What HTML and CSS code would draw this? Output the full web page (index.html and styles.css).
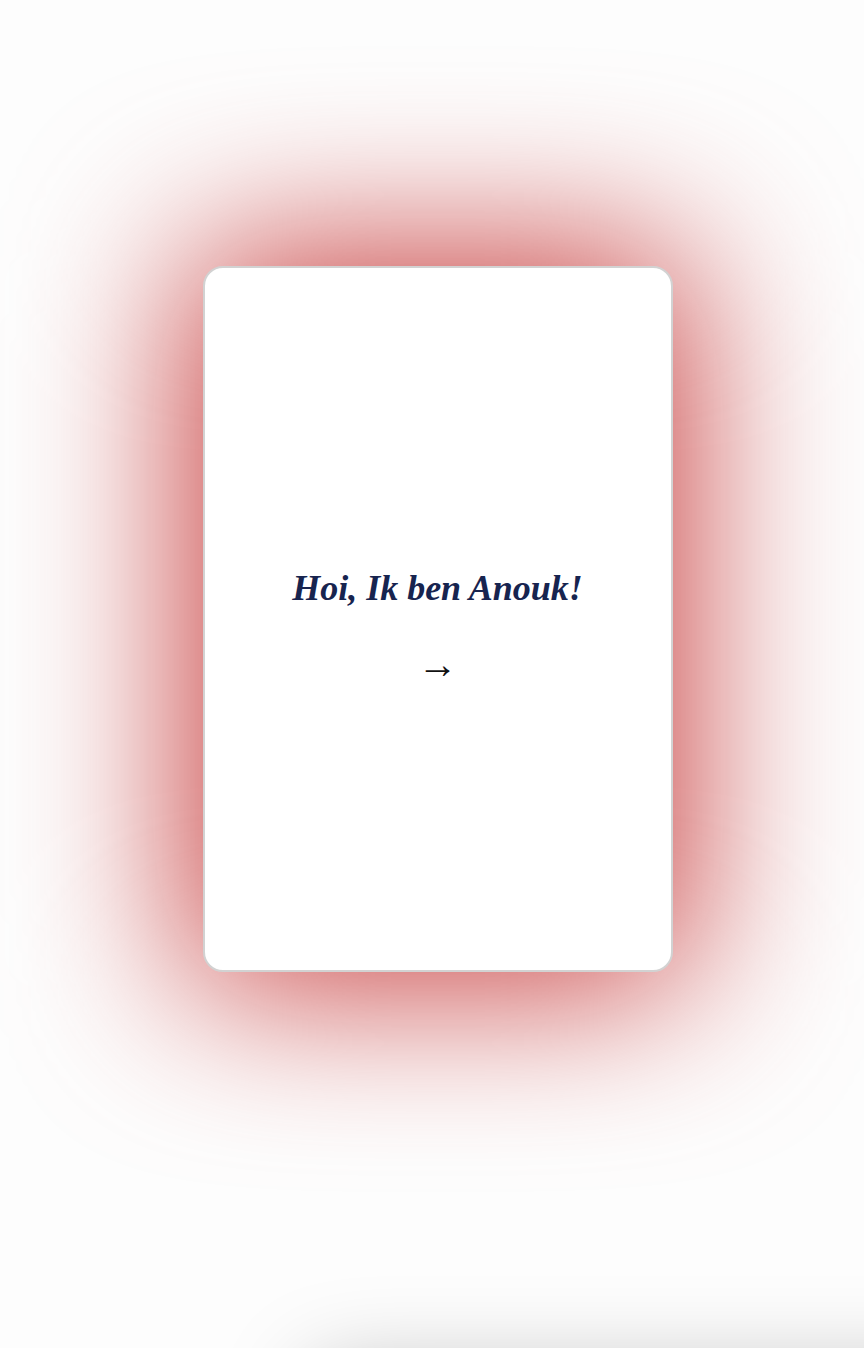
FILE: index.html
```html
<!DOCTYPE html>
<html lang="nl">
<head>
<meta charset="utf-8">
<title>Anouk</title>
<link rel="stylesheet" href="styles.css">
</head>
<body>
<main class="stage">
  <section class="card">
    <h1 class="card-title">Hoi, Ik ben Anouk!</h1>
    <div class="card-arrow">→</div>
  </section>
  <div class="next-card"></div>
</main>
</body>
</html>
```
FILE: styles.css
```css
html {
  background: #fdfdfd;
}
body {
  margin: 0;
  padding: 0;
}
.stage {
  position: relative;
  z-index: 0;
  height: 1348px;
  overflow: hidden;
  display: flex;
  flex-direction: column;
  align-items: center;
  padding-top: 266px;
  box-sizing: border-box;
}
.card {
  flex: none;
  position: relative;
  box-sizing: border-box;
  width: 470px;
  height: 706px;
  margin-left: 11px;
  background: #fff;
  border: 2px solid #d2d2d2;
  border-radius: 20px;
  display: flex;
  flex-direction: column;
  align-items: center;
  justify-content: center;
  padding-top: 14px;
}
.card::before {
  content: "";
  position: absolute;
  inset: -18px;
  border-radius: 36px;
  background: rgb(200, 62, 62);
  filter: blur(85px);
  z-index: -1;
}
.card-title {
  margin: 0;
  font-family: "Liberation Serif", "Times New Roman", serif;
  font-style: italic;
  font-weight: bold;
  font-size: 36px;
  line-height: 44px;
  color: #17244f;
}
.card-arrow {
  margin-top: 33px;
  font-family: "Liberation Serif", "Times New Roman", serif;
  font-size: 40px;
  line-height: 44px;
  color: #111;
}
.next-card {
  flex: none;
  align-self: flex-start;
  margin-left: 310px;
  margin-top: 398px;
  width: 700px;
  height: 300px;
  border-radius: 20px;
  background: #fff;
  box-shadow: 0 0 90px rgba(0, 0, 0, 0.26);
}
```
